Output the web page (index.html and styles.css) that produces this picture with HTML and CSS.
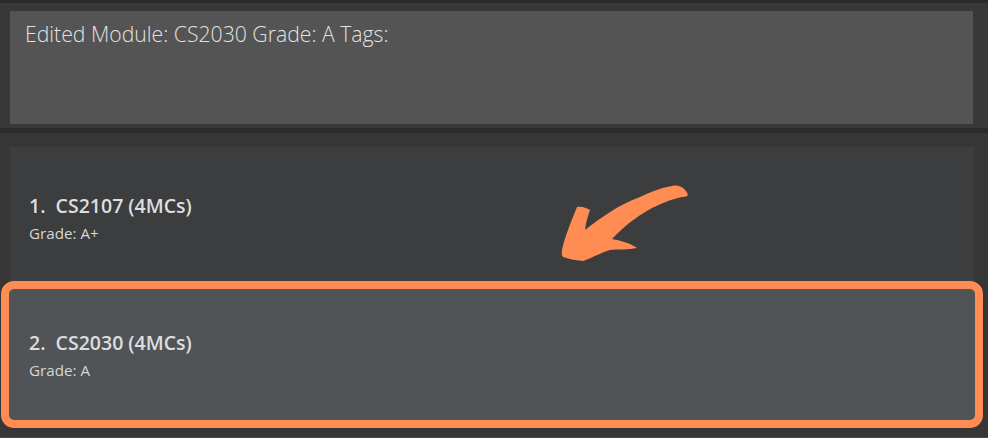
FILE: index.html
```html
<!DOCTYPE html>
<html>
<head>
<meta charset="utf-8">
<link rel="stylesheet" href="styles.css">
</head>
<body>
<div class="app">
  <div class="top-strip"></div>
  <div class="result-pane">
    <div class="result-box">Edited Module: CS2030 Grade: A Tags:</div>
  </div>
  <div class="separator"></div>
  <div class="list-pane">
    <div class="card">
      <div class="card-title">1.&nbsp;&nbsp;CS2107 (4MCs)</div>
      <div class="card-grade">Grade: A+</div>
    </div>
    <div class="card card-selected">
      <div class="card-title">2.&nbsp;&nbsp;CS2030 (4MCs)</div>
      <div class="card-grade">Grade: A</div>
    </div>
    <svg class="arrow" width="140" height="90" viewBox="555 178 140 90">
      <path d="M672 186 C680 184 686 189 688 195 C686 197 684 197 682 197 C660 202 636 214 612 239 C622 241 630 243 637 248 C628 250 618 249 610 250 C600 253 592 258 583 261 C575 260 568 259 563 257 C561 254 562 252 562 250 C565 236 571 222 577 207 C582 206 586 208 590 210 C588 216 586 222 585 230 C600 218 620 204 640 197 C650 192 660 188 672 186 Z" fill="#ff8c52"/>
    </svg>
  </div>
  <div class="bottom-strip"></div>
</div>
</body>
</html>
```
FILE: styles.css
```css
* { box-sizing: border-box; }
html, body { margin: 0; padding: 0; }
body {
  width: 988px;
  height: 438px;
  overflow: hidden;
  background: #373737;
  font-family: "Open Sans", "Noto Sans", sans-serif;
}
.app { display: flex; flex-direction: column; height: 438px; }
.top-strip { height: 3px; background: #2a2a2a; flex: none; }
.result-pane {
  flex: none;
  background: #383838;
  padding: 8px 15px 4px 10px;
}
.result-box {
  height: 113px;
  background: #545454;
  color: #e2e2e2;
  font-size: 21.2px;
  font-weight: 300;
  line-height: 28px;
  padding: 9px 15px;
}
.separator { height: 5px; background: #2b2b2b; flex: none; }
.list-pane {
  position: relative;
  flex: 1;
  background: #363636;
  padding: 14px 14px 0 10px;
  display: flex;
  flex-direction: column;
}
.card {
  height: 134px;
  background: #3c3d3f;
  display: flex;
  flex-direction: column;
  justify-content: center;
  padding: 8px 19px 0;
  color: #dedede;
}
.card-selected {
  height: 147px;
  margin: 0 -9px;
  border: 8px solid #ff8c52;
  border-radius: 13px;
  background: #505457;
  padding: 0 20px 0;
}
.card-title {
  font-size: 19.5px;
  font-weight: 600;
  line-height: 26px;
}
.card-grade {
  font-size: 15.2px;
  line-height: 20px;
  margin-top: 4px;
  color: #d6d6d6;
}
.arrow {
  position: absolute;
  left: 555px;
  top: 45px;
}
.bottom-strip { height: 10px; background: #363636; flex: none; border-bottom: 1px solid #4a4a4a; }
```
